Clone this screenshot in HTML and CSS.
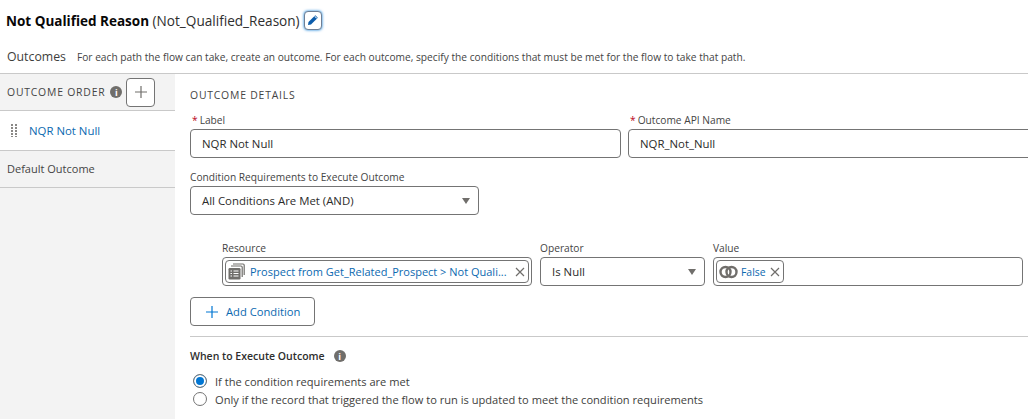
FILE: index.html
```html
<!DOCTYPE html>
<html lang="en">
<head>
  <meta charset="UTF-8" />
  <title>Not Qualified Reason</title>
  <link rel="stylesheet" href="styles.css">
</head>
<body>

  <header class="page-head">
    <h1 class="title"><strong>Not Qualified Reason</strong> (Not_Qualified_Reason)</h1>
    <button class="edit-btn" aria-label="Edit">
      <svg width="12" height="12" viewBox="0 0 12 12"><path fill="#0b5cab" d="M8.3 1.2 10.8 3.7 4 10.5 1 11 1.5 8Z"/><path fill="#fff" d="M7.4 2.6 8 2 10 4 9.4 4.6Z"/></svg>
    </button>
  </header>

  <div class="intro">
    <span class="intro-title">Outcomes</span>
    <span class="intro-text">For each path the flow can take, create an outcome. For each outcome, specify the conditions that must be met for the flow to take that path.</span>
  </div>

  <div class="editor">
    <!-- Outcome list -->
    <aside class="sidebar">
      <div class="order-head">
        <span class="section-label">OUTCOME ORDER</span>
        <span class="info-icon">i</span>
        <button class="add-btn" aria-label="Add outcome">
          <svg width="14" height="14" viewBox="0 0 14 14"><path stroke="#706e6b" stroke-width="1.2" d="M7 1v12M1 7h12"/></svg>
        </button>
      </div>
      <div class="outcome outcome-active">
        <svg class="grip" width="8" height="13" viewBox="0 0 8 13"><path stroke="#8a8886" stroke-width="2" stroke-dasharray="2 1" d="M2 0v13M6 0v13"/></svg>
        <a class="link">NQR Not Null</a>
      </div>
      <div class="outcome outcome-default">Default Outcome</div>
    </aside>

    <!-- Outcome details -->
    <main class="details">
      <div class="section-label details-head">OUTCOME DETAILS</div>

      <div class="name-row">
        <div class="field">
          <label class="field-label"><span class="req">*</span>Label</label>
          <div class="input">NQR Not Null</div>
        </div>
        <div class="field">
          <label class="field-label"><span class="req">*</span>Outcome API Name</label>
          <div class="input input-bleed">NQR_Not_Null</div>
        </div>
      </div>

      <div class="field req-field">
        <label class="field-label">Condition Requirements to Execute Outcome</label>
        <div class="input select">All Conditions Are Met (AND)<span class="caret"></span></div>
      </div>

      <div class="condition-row">
        <div class="field">
          <label class="field-label">Resource</label>
          <div class="input pill-box">
            <div class="pill pill-wide">
              <svg width="17" height="17" viewBox="0 0 17 17"><path fill="none" stroke="#706e6b" stroke-width="1.2" d="M5 1h10a1.2 1.2 0 0 1 1.2 1.2V12"/><path fill="none" stroke="#706e6b" stroke-width="1.2" d="M3 3h10a1.2 1.2 0 0 1 1.2 1.2V14"/><rect fill="#706e6b" x="0.5" y="5" width="12" height="11.5" rx="1.2"/><path stroke="#fff" d="M2.5 8h1.5M5.5 8h5M2.5 10.5h1.5M5.5 10.5h5M2.5 13h1.5M5.5 13h5"/></svg>
              <span class="pill-text">Prospect from Get_Related_Prospect &gt; Not Quali...</span>
              <svg class="pill-x" width="10" height="10" viewBox="0 0 10 10"><path stroke="#706e6b" stroke-width="1.2" d="M1 1l8 8M9 1l-8 8"/></svg>
            </div>
          </div>
        </div>
        <div class="field">
          <label class="field-label">Operator</label>
          <div class="input select">Is Null<span class="caret"></span></div>
        </div>
        <div class="field">
          <label class="field-label">Value</label>
          <div class="input pill-box">
            <div class="pill pill-value">
              <svg width="19" height="14" viewBox="0 0 19 14"><circle cx="6.5" cy="7" r="5" fill="none" stroke="#706e6b" stroke-width="2.4"/><circle cx="12.5" cy="7" r="5" fill="none" stroke="#706e6b" stroke-width="2.4"/></svg>
              <span class="pill-text">False</span>
              <svg class="pill-x" width="10" height="10" viewBox="0 0 10 10"><path stroke="#706e6b" stroke-width="1.2" d="M1 1l8 8M9 1l-8 8"/></svg>
            </div>
          </div>
        </div>
      </div>

      <button class="add-condition">
        <svg width="12" height="12" viewBox="0 0 12 12"><path stroke="#0176d3" stroke-width="1.2" d="M6 0v12M0 6h12"/></svg>
        Add Condition
      </button>

      <hr class="divider">

      <div class="when-head">
        <span class="when-title">When to Execute Outcome</span>
        <span class="info-icon">i</span>
      </div>

      <div class="radio-row"><span class="radio radio-on"></span>If the condition requirements are met</div>
      <div class="radio-row"><span class="radio"></span>Only if the record that triggered the flow to run is updated to meet the condition requirements</div>
    </main>
  </div>

</body>
</html>
```

FILE: styles.css
```css
html, body {
  height: 100%;
}

body {
  font-family: "Open Sans", "Noto Sans", Arial, sans-serif;
  font-size: 12px;
  background-color: #ffffff;
  color: #3e3e3c;
  margin: 0;
  overflow: hidden;
}

.page-head {
  display: flex;
  align-items: center;
  gap: 4px;
  height: 30px;
  padding: 5px 0 0 6px;
}

.title {
  margin: 0;
  font-size: 13.6px;
  font-weight: 400;
  color: #2e2e2e;
}

.title strong {
  font-size: 13.5px;
  font-weight: 700;
  color: #080707;
}

.edit-btn {
  display: flex;
  align-items: center;
  justify-content: center;
  width: 18px;
  height: 19px;
  padding: 0;
  background-color: #fff;
  border: 1px solid #6f7f95;
  border-radius: 4px;
  box-shadow: 0 0 3px #0176d3;
}

.intro {
  display: flex;
  align-items: baseline;
  gap: 11px;
  height: 38px;
  padding: 13px 0 0 7px;
  box-sizing: border-box;
}

.intro-title {
  font-size: 12.3px;
  color: #3e3e3c;
}

.intro-text {
  font-size: 10.2px;
  color: #444;
}

.editor {
  display: flex;
  border-top: 1px solid #c9c9c9;
  height: 346px;
}

.sidebar {
  width: 175px;
  flex-shrink: 0;
  background-color: #f3f3f3;
}

.order-head {
  display: flex;
  align-items: center;
  height: 36px;
  padding-left: 7px;
  border-bottom: 1px solid #c9c9c9;
}

.section-label {
  font-size: 10.4px;
  letter-spacing: 0.8px;
  color: #444;
}

.order-head .info-icon {
  margin-left: 5px;
}

.info-icon {
  display: inline-flex;
  align-items: center;
  justify-content: center;
  width: 12px;
  height: 12px;
  border-radius: 50%;
  background-color: #706e6b;
  color: #fff;
  font-size: 9px;
  font-weight: 700;
  line-height: 1;
}

.add-btn {
  display: flex;
  align-items: center;
  justify-content: center;
  width: 29px;
  height: 29px;
  margin-left: 4px;
  padding: 0;
  background-color: #fff;
  border: 1px solid #747474;
  border-radius: 4px;
}

.outcome {
  display: flex;
  align-items: center;
  height: 36px;
  padding-left: 7px;
  border-bottom: 1px solid #c9c9c9;
  font-size: 11.4px;
  color: #444;
}

.outcome-default {
  font-size: 11px;
  padding-bottom: 2px;
  height: 34px;
}

.outcome-active {
  height: 39px;
  background-color: #fff;
}

.grip {
  margin: 0 11px 0 3px;
}

.link {
  color: #0b69b0;
}

.details {
  flex: 1;
  min-width: 0;
  padding-left: 15px;
}

.details-head {
  padding-top: 14px;
  height: 39px;
  box-sizing: border-box;
}

.name-row {
  display: grid;
  grid-template-columns: 431px 420px;
  gap: 7px;
}

.field {
  display: flex;
  flex-direction: column;
}

.field-label {
  height: 16px;
  font-size: 10.2px;
  line-height: 14px;
  padding-left: 0;
  color: #444;
}

.req {
  color: #ba0517;
  margin: 0 2px 0 2px;
}

.input {
  display: flex;
  align-items: center;
  position: relative;
  height: 29px;
  box-sizing: border-box;
  padding: 0 11px;
  font-size: 11.4px;
  color: #2b2b2b;
  background-color: #fff;
  border: 1px solid #747474;
  border-radius: 4px;
}

.input-bleed {
  border-radius: 4px 0 0 4px;
}

.req-field {
  width: 289px;
  margin-top: 12px;
}

.caret {
  position: absolute;
  right: 8px;
  top: 11px;
  border-left: 4.5px solid transparent;
  border-right: 4.5px solid transparent;
  border-top: 6px solid #706e6b;
}

.condition-row {
  display: grid;
  grid-template-columns: 310px 165px 310px;
  gap: 8px;
  margin: 26px 0 0 32px;
}

.pill-box {
  padding: 0 2px;
}

.pill {
  display: inline-flex;
  align-items: center;
  gap: 5px;
  height: 23px;
  padding: 0 3px 0 2px;
  box-sizing: border-box;
  background-color: #fff;
  border: 1px solid #747474;
  border-radius: 4px;
}

.pill-wide {
  width: 100%;
}

.pill-value {
  width: 68px;
  gap: 3px;
}

.pill-text {
  flex: 1;
  font-size: 11px;
  color: #0b69b0;
  white-space: nowrap;
}

.pill-value .pill-text {
  font-size: 10.4px;
}

.pill-x {
  flex-shrink: 0;
}

.add-condition {
  display: flex;
  align-items: center;
  gap: 8px;
  width: 125px;
  height: 29px;
  margin-top: 11px;
  padding: 0 0 0 15px;
  font-family: inherit;
  font-size: 11.2px;
  color: #0b69b0;
  background-color: #fff;
  border: 1px solid #747474;
  border-radius: 4px;
}

.divider {
  margin: 10px 0 0;
  border: 0;
  border-top: 1px solid #c9c9c9;
}

.when-head {
  display: flex;
  align-items: center;
  gap: 9px;
  margin-top: 11px;
  height: 16px;
}

.when-title {
  font-size: 10.5px;
  font-weight: 600;
  color: #2e2e2e;
}

.radio-row {
  display: flex;
  align-items: center;
  gap: 8px;
  height: 18px;
  padding-left: 3px;
  font-size: 11.1px;
  color: #3e3e3c;
}

.when-head + .radio-row {
  margin-top: 8px;
}

.radio {
  width: 14px;
  height: 14px;
  box-sizing: border-box;
  border: 1px solid #747474;
  border-radius: 50%;
  background-color: #fff;
}

.radio-on {
  background-color: #0176d3;
  box-shadow: inset 0 0 0 2px #fff;
}
```
